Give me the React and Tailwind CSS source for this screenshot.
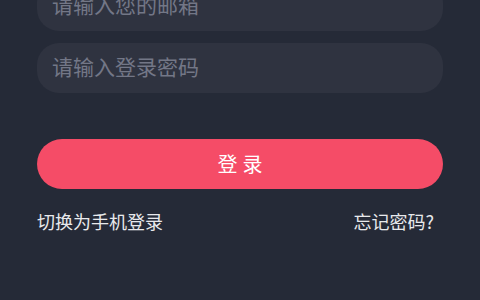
export default function App() {
  const font = { fontFamily: '"Noto Sans CJK SC", "Noto Sans", sans-serif' }
  return (
    <div className="h-[300px] w-[480px] overflow-hidden bg-[#252a37]" style={font}>
      <div className="mt-[-19px] flex flex-col px-[37px]">
        <input
          className="h-[50px] w-full rounded-[22px] bg-[#2f3340] px-[15px] pb-[4px] text-[21px] text-gray-200 outline-none placeholder:text-[#737787]"
          placeholder="请输入您的邮箱"
        />
        <input
          type="password"
          className="mt-[12px] h-[50px] w-full rounded-[22px] bg-[#2f3340] px-[15px] pb-[4px] text-[21px] text-gray-200 outline-none placeholder:text-[#737787]"
          placeholder="请输入登录密码"
        />
        <button className="mt-[46px] flex h-[50px] w-full items-center justify-center rounded-full bg-[#f54c67] text-[20px] tracking-[5px] text-white">
          <span className="pl-[5px]">登录</span>
        </button>
        <div className="mt-[20px] flex items-center justify-between text-[18px] leading-[24px] text-[#e8e9ec]">
          <span>切换为手机登录</span>
          <span className="pr-[9px]">忘记密码?</span>
        </div>
      </div>
    </div>
  )
}
